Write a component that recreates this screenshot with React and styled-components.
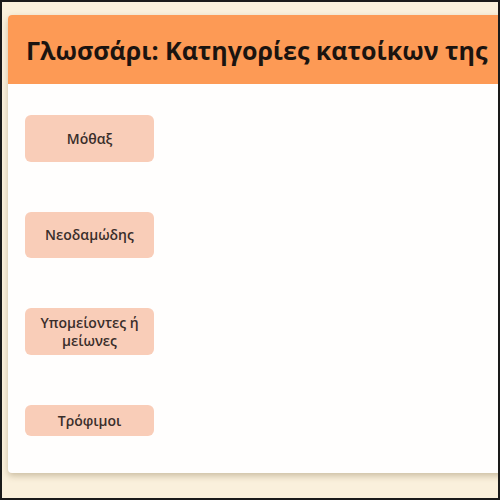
import React from 'react';
import styled, { createGlobalStyle } from 'styled-components';

const Global = createGlobalStyle`
  html, body { margin: 0; padding: 0; }
  body { font-family: "Open Sans", "Noto Sans", sans-serif; }
`;

const terms = [
  { label: 'Μόθαξ', height: 47 },
  { label: 'Νεοδαμώδης', height: 46 },
  { label: 'Υπομείοντες ή μείωνες', height: 47 },
  { label: 'Τρόφιμοι', height: 31 },
];

export default function App() {
  return (
    <Frame>
      <Global />
      <Card>
        <Header>
          <Title>Γλωσσάρι: Κατηγορίες κατοίκων της</Title>
        </Header>
        <Body>
          {terms.map((t) => (
            <Term key={t.label} h={t.height}>{t.label}</Term>
          ))}
        </Body>
      </Card>
    </Frame>
  );
}

const Frame = styled.div`
  box-sizing: border-box;
  width: 500px;
  height: 500px;
  border: 2px solid #1a1a1a;
  background: #faf0dc;
  padding: 13px 0 0 6px;
  overflow: hidden;
`;

const Card = styled.div`
  background: #fffefd;
  height: 458px;
  width: 520px;
  border-radius: 4px;
  box-shadow: 0 3px 6px rgba(120, 100, 60, 0.35);
  overflow: hidden;
`;

const Header = styled.div`
  height: 69px;
  background: #fd9a55;
  display: flex;
  align-items: center;
  padding-left: 18px;
`;

const Title = styled.h1`
  margin: 0;
  font-size: 25px;
  font-weight: 700;
  color: #1b1410;
  white-space: nowrap;
`;

const Body = styled.div`
  display: flex;
  flex-direction: column;
  align-items: flex-start;
  gap: 50px;
  padding: 31px 17px;
`;

const Term = styled.div`
  box-sizing: border-box;
  width: 129px;
  height: ${(p) => p.h}px;
  background: #f9cdb8;
  border-radius: 6px;
  display: flex;
  align-items: center;
  justify-content: center;
  text-align: center;
  padding: 0 8px;
  font-size: 14px;
  font-weight: 600;
  line-height: 18px;
  color: #3a2e2b;
`;
